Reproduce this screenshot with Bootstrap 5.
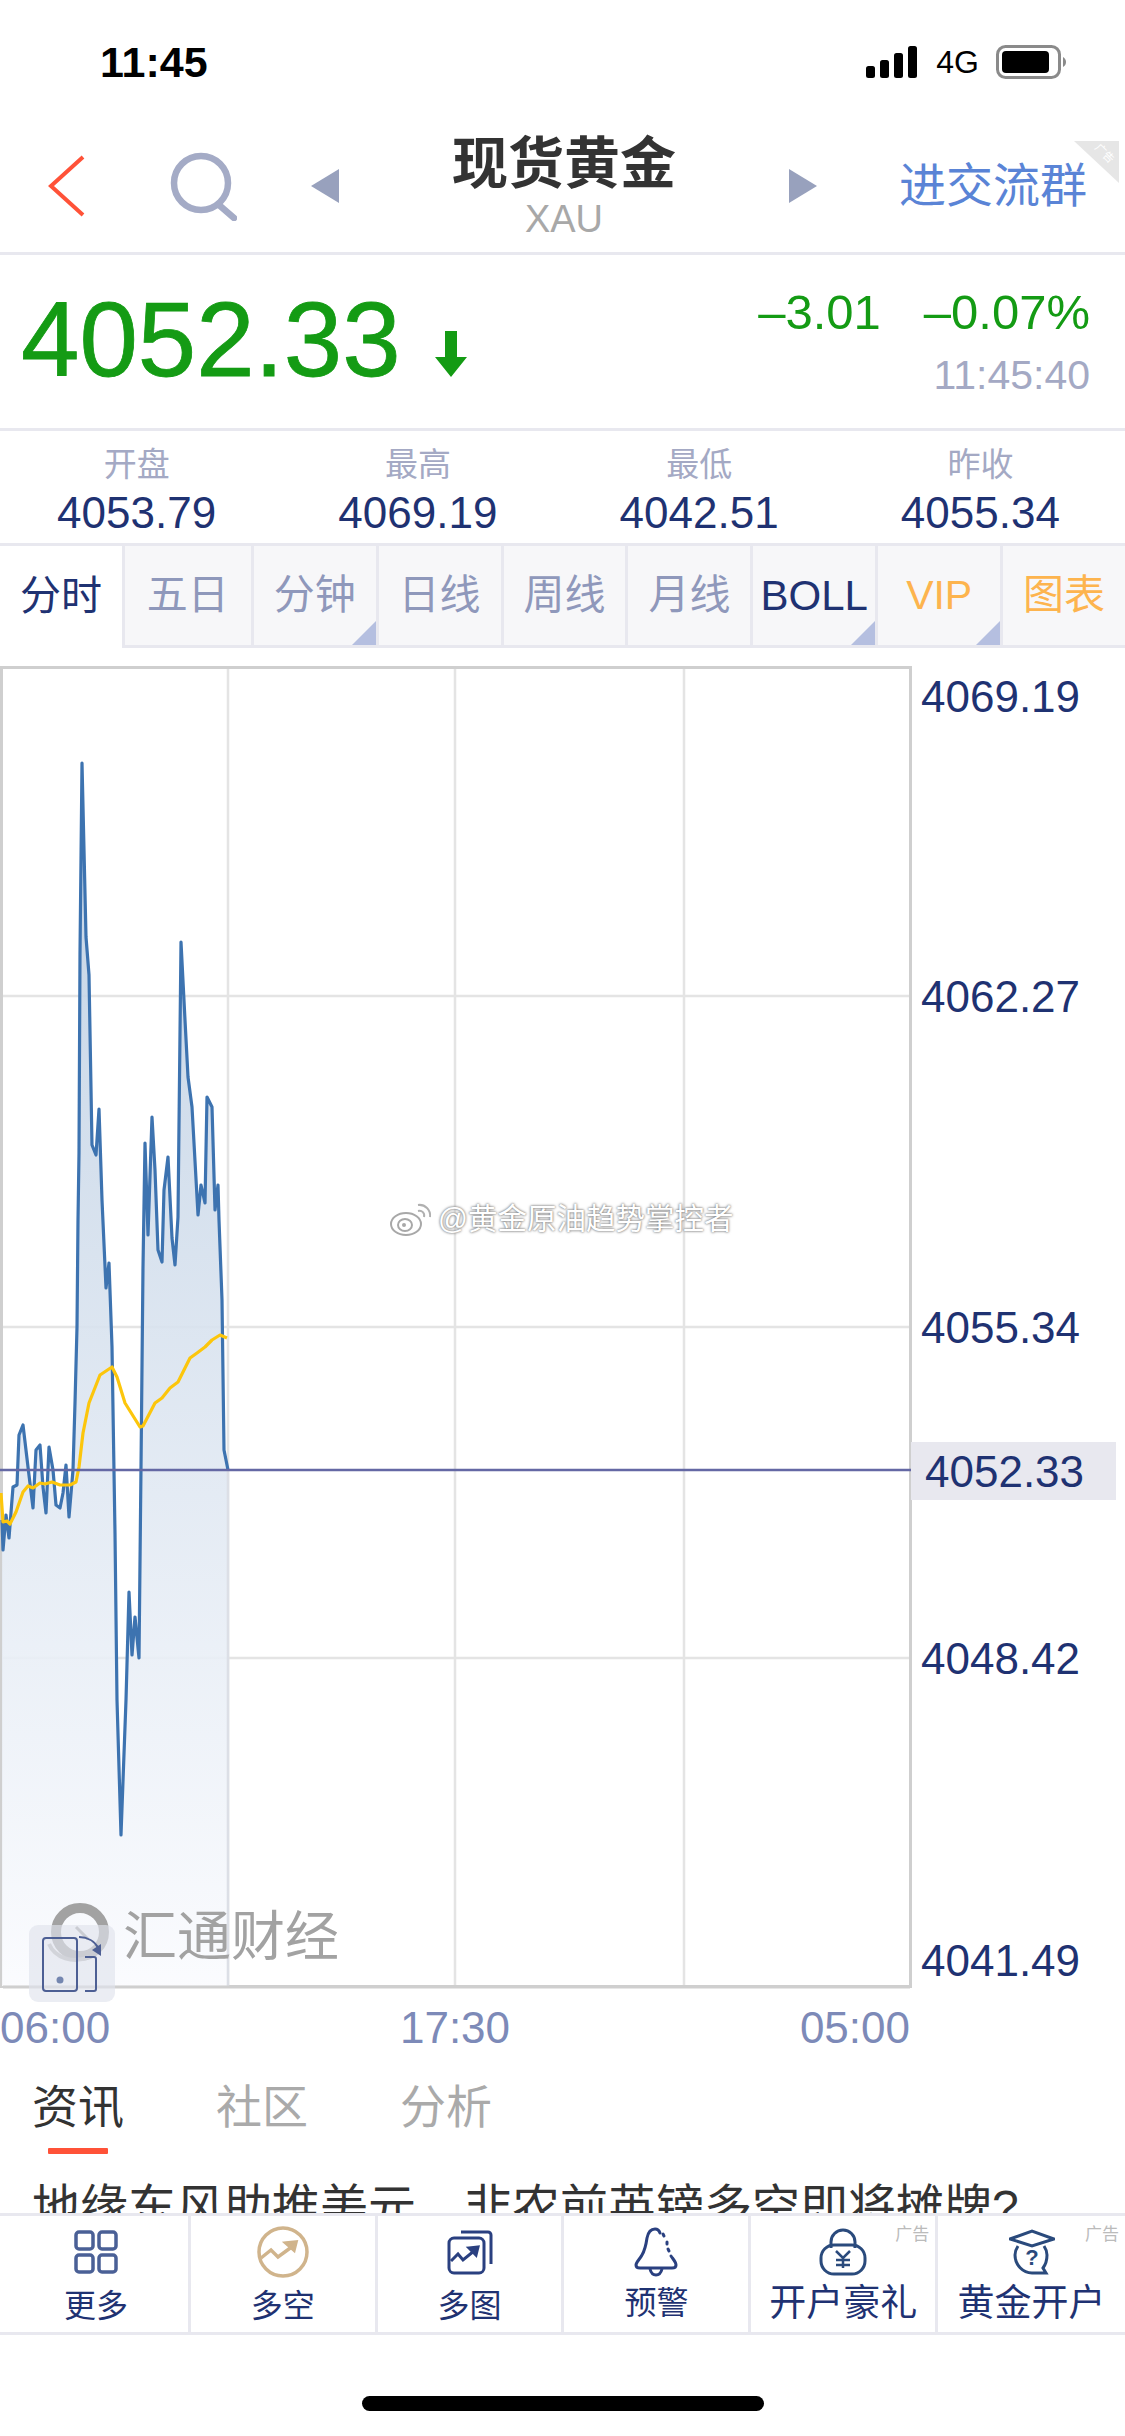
<!DOCTYPE html>
<html lang="zh-CN">
<head>
<meta charset="UTF-8">
<meta name="viewport" content="width=device-width, initial-scale=1.0">
<title>现货黄金</title>
<link href="https://cdn.jsdelivr.net/npm/bootstrap@5.3.0/dist/css/bootstrap.min.css" rel="stylesheet">
<style>
    body {
        width: 1125px;
        height: 2436px;
        overflow: hidden;
        background: #fff;
        font-family: "Liberation Sans", "Noto Sans CJK SC", sans-serif;
        color: #1f3272;
    }
    /* status bar */
    .status-bar { height: 130px; padding: 0 59px 6px 100px; }
    .status-time { font-size: 43px; font-weight: 700; line-height: 42px; color: #000; }
    .status-4g { font-size: 32px; line-height: 32px; color: #000; margin: 0 17px 0 19px; }

    /* title bar */
    .title-bar { height: 125px; border-bottom: 3px solid #e8e8ef; padding: 0 0 10px 46px; }
    .title-back { width: 40px; }
    .title-search { width: 70px; margin: 0 74px 0 81px; }
    .title-center { width: 450px; }
    .title-main { font-size: 56px; font-weight: 700; line-height: 62px; color: #333; }
    .title-code { font-size: 38px; line-height: 40px; color: #a8a8a8; margin-top: 4px; }
    .title-group { font-size: 47px; line-height: 50px; color: #5a84d6; margin-left: auto; margin-right: 38px; }
    .title-bar svg { display: block; }
    .ad-corner { position: absolute; top: 11px; right: 6px; }

    /* quote */
    .quote-box { height: 176px; border-bottom: 3px solid #e8e8ef; padding: 0 35px 0 21px; }
    .quote-price { font-size: 105px; line-height: 104px; color: #149b14; margin-top: 33px; -webkit-text-stroke: .8px #149b14; }
    .quote-arrow { margin: 76px 0 0 34px; }
    .quote-change { font-size: 49px; line-height: 50px; color: #149b14; margin-top: 32px; gap: 43px; }
    .quote-time { font-size: 41px; line-height: 44px; color: #a4a9c4; margin-top: 16px; }

    /* open / high / low / prev */
    .stats-box { height: 115px; border-bottom: 3px solid #e8e8ef; padding-top: 15px; overflow: hidden; }
    .stats-row { width: 1125px; margin-left: -4px; }
    .stats-label { font-size: 33px; line-height: 38px; color: #a4a9c4; }
    .stats-value { font-size: 44px; line-height: 46px; color: #1f3272; margin-top: 6px; }

    /* period tabs */
    .period-tabs { height: 102px; }
    .period-tab {
        position: relative;
        width: 125px;
        font-size: 41px;
        color: #8f98bb;
        background: #f7f7f9;
        border-left: 3px solid #e8e8ef;
        border-bottom: 3px solid #e8e8ef;
    }
    .period-tab.is-active { width: 122px; color: #1f3272; background: #fff; border: 0; }
    .period-tab.is-second { width: 129px; }
    .period-tab.is-dark { color: #1f3272; font-size: 42px; }
    .period-tab.is-gold { color: #fdb44e; }
    .period-tab.is-last { flex: 1 1 auto; }
    .period-tab.has-menu::after {
        content: "";
        position: absolute;
        right: 0;
        bottom: 0;
        border-style: solid;
        border-width: 0 0 24px 24px;
        border-color: transparent transparent #b5bfe0 transparent;
    }

    /* chart */
    .chart-wrap { position: relative; height: 1324px; margin-top: 18px; }
    .chart-wrap svg { display: block; }
    .axis-text { font-size: 44px; fill: #1f3272; }
    .brand-text { font-size: 54px; fill: #a2a2a2; font-family: "Noto Sans CJK SC", sans-serif; }
    .stamp {
        position: absolute;
        top: 535px;
        left: 390px;
        gap: 4px;
        font-size: 29.5px;
        line-height: 36px;
        color: #fff;
        text-shadow: 0 0 3px #777, 0 0 2px #999;
    }
    .time-axis { width: 911px; padding: 0 1px 0 0; margin-top: 15px; font-size: 44px; line-height: 46px; color: #7d8ab8; }

    /* news tabs */
    .news-tabs { gap: 92px; padding-left: 32px; margin-top: 26px; font-size: 46px; line-height: 60px; color: #aaa; }
    .news-tab-on { position: relative; color: #333; }
    .news-tab-on::after {
        content: "";
        position: absolute;
        left: 16px;
        top: 71px;
        width: 60px;
        height: 6px;
        border-radius: 1px;
        background: #ff5238;
    }
    .news-head { height: 62px; overflow: hidden; padding: 29px 0 0 32px; margin-top: 14px; font-size: 48px; line-height: 56px; color: #333; white-space: nowrap; }

    /* bottom toolbar */
    .tool-bar { height: 122px; border-top: 3px solid #e8e8ef; border-bottom: 3px solid #e8e8ef; background: #fff; padding-left: 4px; }
    .tool-item { position: relative; width: 187.5px; border-right: 3px solid #e8e8ef; padding-top: 8px; font-size: 32px; line-height: 36px; color: #1f3272; }
    .tool-item:last-child { border-right: 0; }
    .tool-icon { height: 56px; }
    .tool-icon svg { display: block; }
    .tool-text { margin-top: 8px; }
    .tool-text-up { margin-top: 5px; }
    .tool-wide { font-size: 37px; line-height: 38px; margin-top: 5px; white-space: nowrap; }
    .tool-ad { position: absolute; top: 9px; right: 6px; font-size: 17px; line-height: 20px; color: #bbb; }
    .home-bar { width: 402px; height: 15px; margin: 61px auto 0; border-radius: 8px; background: #000; }
</style>
</head>
<body>

<div class="status-bar d-flex justify-content-between align-items-center">
    <div class="status-time">11:45</div>
    <div class="d-flex align-items-center">
        <svg width="51" height="32" viewBox="0 0 51 32" fill="#000">
            <rect x="0" y="20" width="9" height="12" rx="2.5"/>
            <rect x="14" y="14" width="9" height="18" rx="2.5"/>
            <rect x="28" y="7" width="9" height="25" rx="2.5"/>
            <rect x="42" y="0" width="9" height="32" rx="2.5"/>
        </svg>
        <div class="status-4g">4G</div>
        <svg width="70" height="34" viewBox="0 0 70 34">
            <rect x="1.5" y="1.5" width="62" height="31" rx="8" fill="none" stroke="#8a8a8a" stroke-width="3"/>
            <rect x="6" y="6" width="47" height="22" rx="4" fill="#000"/>
            <path d="M67 12c2 1 3 3 3 5s-1 4-3 5z" fill="#8a8a8a"/>
        </svg>
    </div>
</div>

<div class="title-bar d-flex align-items-center position-relative">
    <div class="title-back">
        <svg width="40" height="62" viewBox="0 0 40 62">
            <path d="M37 2 5 31 37 60" fill="none" stroke="#ff5238" stroke-width="4"/>
        </svg>
    </div>
    <div class="title-search">
        <svg width="70" height="70" viewBox="0 0 70 70">
            <circle cx="34" cy="32" r="27" fill="none" stroke="#a4abc6" stroke-width="6.5"/>
            <path d="M52 54 67 67" stroke="#a4abc6" stroke-width="6.5" stroke-linecap="round"/>
        </svg>
    </div>
    <svg width="28" height="34" viewBox="0 0 28 34"><path d="M28 0v34L0 17z" fill="#98a1bd"/></svg>
    <div class="title-center text-center">
        <div class="title-main">现货黄金</div>
        <div class="title-code">XAU</div>
    </div>
    <svg width="28" height="34" viewBox="0 0 28 34"><path d="M0 0v34l28-17z" fill="#98a1bd"/></svg>
    <div class="title-group">进交流群</div>
    <svg class="ad-corner" width="45" height="42" viewBox="0 0 45 42">
        <path d="M0 0h45v42z" fill="#e6e6e6"/>
        <text x="28" y="15" font-size="11" fill="#fff" transform="rotate(45 28 15)" text-anchor="middle">广告</text>
    </svg>
</div>

<div class="quote-box d-flex justify-content-between align-items-start">
    <div class="d-flex align-items-start">
        <div class="quote-price">4052.33</div>
        <svg class="quote-arrow" width="32" height="46" viewBox="0 0 32 46"><path d="M10 0h12v26h10L16 46 0 26h10z" fill="#149b14"/></svg>
    </div>
    <div class="text-end">
        <div class="quote-change d-flex justify-content-end"><span>–3.01</span><span>–0.07%</span></div>
        <div class="quote-time">11:45:40</div>
    </div>
</div>

<div class="stats-box">
    <div class="stats-row row g-0 text-center">
        <div class="col-3"><div class="stats-label">开盘</div><div class="stats-value">4053.79</div></div>
        <div class="col-3"><div class="stats-label">最高</div><div class="stats-value">4069.19</div></div>
        <div class="col-3"><div class="stats-label">最低</div><div class="stats-value">4042.51</div></div>
        <div class="col-3"><div class="stats-label">昨收</div><div class="stats-value">4055.34</div></div>
    </div>
</div>

<div class="period-tabs d-flex">
    <div class="period-tab is-active d-flex align-items-center justify-content-center">分时</div>
    <div class="period-tab is-second d-flex align-items-center justify-content-center">五日</div>
    <div class="period-tab has-menu d-flex align-items-center justify-content-center">分钟</div>
    <div class="period-tab d-flex align-items-center justify-content-center">日线</div>
    <div class="period-tab d-flex align-items-center justify-content-center">周线</div>
    <div class="period-tab d-flex align-items-center justify-content-center">月线</div>
    <div class="period-tab is-dark has-menu d-flex align-items-center justify-content-center">BOLL</div>
    <div class="period-tab is-gold has-menu d-flex align-items-center justify-content-center">VIP</div>
    <div class="period-tab is-gold is-last d-flex align-items-center justify-content-center">图表</div>
</div>

<div class="chart-wrap">
    <svg width="1125" height="1340" viewBox="0 666 1125 1340">
        <defs>
            <linearGradient id="areaFill" x1="0" y1="763" x2="0" y2="1987" gradientUnits="userSpaceOnUse">
                <stop offset="0" stop-color="#bccee2"/>
                <stop offset="1" stop-color="#fafbfe"/>
            </linearGradient>
        </defs>
        <!-- grid -->
        <g stroke="#e4e4e4" stroke-width="2.5" fill="none">
            <path d="M228 668V1986M455 668V1986M684 668V1986"/>
            <path d="M2 996H910M2 1327H910M2 1658H910"/>
        </g>
        <rect x="1.5" y="667.5" width="909" height="1319" fill="none" stroke="#cfcfcf" stroke-width="3"/>
        <!-- price area -->
        <path fill="url(#areaFill)" fill-opacity=".9" d="M2 1986V1520L3 1550 6 1515 9 1538 13 1487 17 1485 19 1435 23 1425 28 1467 33 1508 36 1450 40 1445 43 1487 46 1513 49 1447 53 1470 56 1505 60 1508 63 1493 66 1465 69 1517 73 1470 75 1403 77 1327 78 1220 79 1153 80 953 82 763 86 937 89 975 92 1145 96 1155 99 1109 102 1200 106 1288 109 1263 112 1347 115 1533 117 1700 121 1835 126 1700 129 1592 132 1655 135 1617 139 1658 141 1467 143 1267 145 1143 148 1235 152 1117 155 1170 158 1250 162 1262 164 1190 168 1157 172 1238 175 1265 178 1217 181 942 185 1020 188 1077 192 1107 198 1215 201 1185 205 1203 207 1097 212 1107 215 1210 218 1185 219 1220 222 1300 224 1450 228 1470V1986z"/>
        <path d="M228 1470V1986" stroke="#dcdfe6" stroke-width="2.5"/>
        <path d="M3 1987H910" stroke="#cfcfcf" stroke-width="3"/>
        <polyline fill="none" stroke="#3d73b0" stroke-width="3.2" stroke-linejoin="round" points="2,1520 3,1550 6,1515 9,1538 13,1487 17,1485 19,1435 23,1425 28,1467 33,1508 36,1450 40,1445 43,1487 46,1513 49,1447 53,1470 56,1505 60,1508 63,1493 66,1465 69,1517 73,1470 75,1403 77,1327 78,1220 79,1153 80,953 82,763 86,937 89,975 92,1145 96,1155 99,1109 102,1200 106,1288 109,1263 112,1347 115,1533 117,1700 121,1835 126,1700 129,1592 132,1655 135,1617 139,1658 141,1467 143,1267 145,1143 148,1235 152,1117 155,1170 158,1250 162,1262 164,1190 168,1157 172,1238 175,1265 178,1217 181,942 185,1020 188,1077 192,1107 198,1215 201,1185 205,1203 207,1097 212,1107 215,1210 218,1185 219,1220 222,1300 224,1450 228,1470"/>
        <polyline fill="none" stroke="#fcc60c" stroke-width="3.2" stroke-linejoin="round" points="1,1493 3,1522 7,1521 10,1524 16,1512 23,1492 28,1486 33,1488 40,1483 45,1484 52,1482 60,1485 70,1485 76,1482 79,1467 83,1433 89,1403 100,1375 112,1367 117,1377 125,1403 140,1427 143,1426 155,1403 162,1398 170,1388 178,1382 190,1358 197,1353 205,1347 212,1340 220,1335 227,1338"/>
        <!-- current price -->
        <rect x="911" y="1442" width="205" height="58" fill="#e8e8ef"/>
        <path d="M0 1470H911" stroke="#6468a4" stroke-width="2.5"/>
        <g class="axis-text">
            <text x="921" y="712">4069.19</text>
            <text x="921" y="1012">4062.27</text>
            <text x="921" y="1343">4055.34</text>
            <text x="925" y="1487">4052.33</text>
            <text x="921" y="1674">4048.42</text>
            <text x="921" y="1976">4041.49</text>
        </g>
        <!-- watermark brand -->
        <g fill="none" stroke="#a2a2a2">
            <circle cx="80" cy="1932" r="24" stroke-width="10"/>
            <path d="M49 1944c6 14 24 20 40 13" stroke-width="4" stroke="#b8b8b8"/>
            <path d="M76 1927l12 12" stroke-width="3"/>
        </g>
        <text class="brand-text" x="123" y="1956">汇通财经</text>
        <!-- rotate button -->
        <rect x="29" y="1925" width="86" height="77" rx="9" fill="#e0e3ec" fill-opacity=".65"/>
        <g fill="none" stroke="#4d5f94" stroke-width="2">
            <rect x="43" y="1938" width="34" height="53" rx="3"/>
            <path d="M85 1957h9a2 2 0 0 1 2 2v30a2 2 0 0 1-2 2H85"/>
            <path d="M79 1937c8 0 16 4 20 12"/>
        </g>
        <circle cx="60" cy="1980" r="3.5" fill="#7486b0"/>
        <path d="M92 1950l9-6 0 12z" fill="#4d5f94"/>
    </svg>
    <div class="stamp d-flex align-items-center">
        <svg width="44" height="36" viewBox="0 0 44 36">
            <ellipse cx="16" cy="23" rx="15" ry="11" fill="#fff" stroke="#a8a8a8" stroke-width="2"/>
            <ellipse cx="15" cy="24" rx="7" ry="6" fill="#fff" stroke="#a8a8a8" stroke-width="2"/>
            <circle cx="14" cy="24" r="2" fill="#a8a8a8"/>
            <path d="M28 4c7-1 13 5 12 12M28 10c4-1 7 2 6 6" fill="none" stroke="#b0b0b0" stroke-width="2"/>
        </svg>
        <span>@黄金原油趋势掌控者</span>
    </div>
</div>

<div class="time-axis d-flex justify-content-between">
    <span>06:00</span><span>17:30</span><span>05:00</span>
</div>

<div class="news-tabs d-flex">
    <div class="news-tab-on">资讯</div>
    <div>社区</div>
    <div>分析</div>
</div>
<div class="news-head">地缘东风助推美元，非农前英镑多空即将摊牌?</div>

<div class="tool-bar d-flex">
    <div class="tool-item d-flex flex-column align-items-center">
        <div class="tool-icon d-flex align-items-center">
            <svg width="44" height="44" viewBox="0 0 44 44" fill="none" stroke="#4a6096" stroke-width="3.5">
                <rect x="2" y="2" width="17" height="17" rx="3"/><rect x="25" y="2" width="17" height="17" rx="3"/>
                <rect x="2" y="25" width="17" height="17" rx="3"/><rect x="25" y="25" width="17" height="17" rx="3"/>
            </svg>
        </div>
        <div class="tool-text">更多</div>
    </div>
    <div class="tool-item d-flex flex-column align-items-center">
        <div class="tool-icon d-flex align-items-center">
            <svg width="52" height="52" viewBox="0 0 52 52" fill="none" stroke="#d0b48c" stroke-width="3.5">
                <circle cx="26" cy="26" r="24"/>
                <path d="M4 32l10-8 7 7 15-11"/>
                <path d="M29 17l10-1-2 8z" fill="#d0b48c"/>
            </svg>
        </div>
        <div class="tool-text">多空</div>
    </div>
    <div class="tool-item d-flex flex-column align-items-center">
        <div class="tool-icon d-flex align-items-center">
            <svg width="46" height="45" viewBox="0 0 46 45" fill="none" stroke="#2a4080" stroke-width="3">
                <path d="M14 2h27a3 3 0 0 1 3 3v29"/>
                <rect x="2" y="8" width="35" height="35" rx="5"/>
                <path d="M4 31l7-7 5 6 11-9"/>
                <path d="M22 18l9-1-2 8z" fill="#2a4080"/>
            </svg>
        </div>
        <div class="tool-text">多图</div>
    </div>
    <div class="tool-item d-flex flex-column align-items-center">
        <div class="tool-icon d-flex align-items-center">
            <svg width="44" height="50" viewBox="0 0 44 50" fill="none" stroke="#2a4080" stroke-width="3">
                <path d="M26 6c-1-3-3-4-5-4-5 0-7 4-8 9-1 7-2 12-5 17-2 4-6 7-6 10 0 2 2 3 4 3h32c2 0 4-1 4-3 0-3-3-6-5-9" stroke-linecap="round"/>
                <path d="M29 7l1 2M33 15l0 2M34 22l1 2" stroke-linecap="round"/>
                <path d="M16 42c1 4 3 6 6 6s5-2 6-6"/>
            </svg>
        </div>
        <div class="tool-text-up">预警</div>
    </div>
    <div class="tool-item d-flex flex-column align-items-center">
        <div class="tool-icon d-flex align-items-center">
            <svg width="48" height="48" viewBox="0 0 48 48" fill="none" stroke="#2a4a7c" stroke-width="3">
                <path d="M12 20v-6a12 12 0 0 1 24 0v6"/>
                <rect x="2" y="17" width="44" height="29" rx="13"/>
                <path d="M17 23l7 7 7-7M24 30v10M17 32h14M17 37h14" stroke-width="2.5"/>
            </svg>
        </div>
        <div class="tool-wide">开户豪礼</div>
        <span class="tool-ad">广告</span>
    </div>
    <div class="tool-item d-flex flex-column align-items-center">
        <div class="tool-icon d-flex align-items-center">
            <svg width="46" height="46" viewBox="0 0 46 46" fill="none" stroke="#2a4a7c" stroke-width="3">
                <path d="M1 10l22-8 22 8-22 7z" fill="#fff" stroke-width="3"/>
                <path d="M9 17c-2 3-3 6-3 9 0 10 8 18 17 18h14l-3-5c3-4 4-8 4-13 0-3-1-6-3-9"/>
                <text x="23" y="36" font-size="22" font-weight="700" fill="#2a4a7c" stroke="none" text-anchor="middle">?</text>
            </svg>
        </div>
        <div class="tool-wide">黄金开户</div>
        <span class="tool-ad">广告</span>
    </div>
</div>
<div class="home-bar"></div>

<script src="https://cdn.jsdelivr.net/npm/bootstrap@5.3.0/dist/js/bootstrap.bundle.min.js"></script>
</body>
</html>
